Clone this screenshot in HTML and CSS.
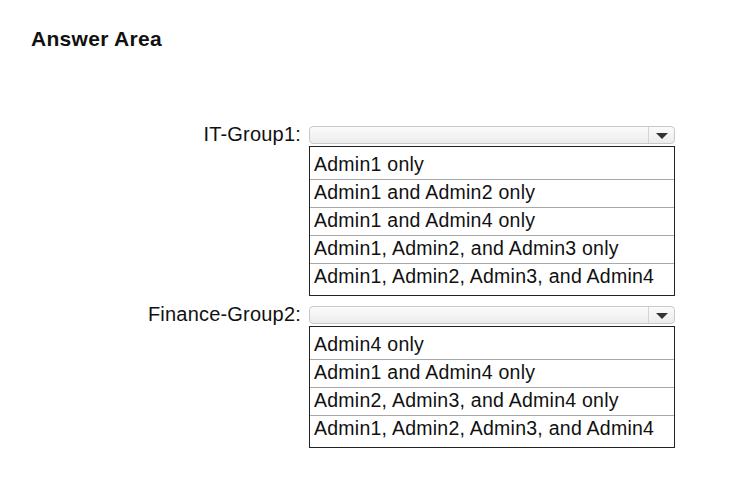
FILE: index.html
```html
<!DOCTYPE html>
<html>
<head>
<meta charset="utf-8">
<link rel="stylesheet" href="styles.css">
</head>
<body>
<div class="page">
  <h1 class="title">Answer Area</h1>
  <div class="group first">
    <div class="label">IT-Group1:</div>
    <div class="field">
      <div class="select"><span class="arrow"></span></div>
      <ul class="options">
        <li>Admin1 only</li>
        <li>Admin1 and Admin2 only</li>
        <li>Admin1 and Admin4 only</li>
        <li>Admin1, Admin2, and Admin3 only</li>
        <li>Admin1, Admin2, Admin3, and Admin4</li>
      </ul>
    </div>
  </div>
  <div class="group">
    <div class="label">Finance-Group2:</div>
    <div class="field">
      <div class="select"><span class="arrow"></span></div>
      <ul class="options">
        <li>Admin4 only</li>
        <li>Admin1 and Admin4 only</li>
        <li>Admin2, Admin3, and Admin4 only</li>
        <li>Admin1, Admin2, Admin3, and Admin4</li>
      </ul>
    </div>
  </div>
</div>
</body>
</html>
```
FILE: styles.css
```css
html, body {
  margin: 0;
  padding: 0;
  background: #fff;
}
body {
  font-family: "Liberation Sans", Arial, sans-serif;
  color: #111;
}
.page {
  width: 729px;
  height: 503px;
  padding: 27px 0 0 31px;
  box-sizing: border-box;
}
.title {
  margin: 0;
  font-size: 21px;
  font-weight: bold;
  letter-spacing: 0.3px;
  line-height: 24px;
  color: #111;
}
.group {
  display: flex;
  align-items: flex-start;
  margin-top: 10px;
}
.group.first {
  margin-top: 75px;
}
.label {
  width: 278px;
  text-align: right;
  font-size: 20px;
  letter-spacing: 0.2px;
  line-height: 17px;
  padding-right: 8px;
  box-sizing: border-box;
  white-space: nowrap;
}
.field {
  width: 366px;
}
.select {
  height: 18px;
  border: 1px solid #c9c9c9;
  border-radius: 4px;
  background: linear-gradient(#fbfbfb, #ececec);
  box-sizing: border-box;
  display: flex;
  justify-content: flex-end;
}
.arrow {
  width: 25px;
  border-left: 1px solid #d4d4d4;
  display: flex;
  align-items: center;
  justify-content: center;
}
.arrow::after {
  content: "";
  border-left: 6px solid transparent;
  border-right: 6px solid transparent;
  border-top: 6px solid #333;
  margin-top: 1px;
}
.options {
  list-style: none;
  margin: 2px 0 0 0;
  padding: 0 0 4px 0;
  border: 1px solid #222;
  width: 366px;
  box-sizing: border-box;
}
.options li {
  height: 28px;
  line-height: 20px;
  font-size: 19.5px;
  letter-spacing: 0.25px;
  padding-left: 4px;
  padding-top: 2px;
  border-top: 1px solid #a8a8a8;
  box-sizing: border-box;
  white-space: nowrap;
}
.options li:first-child {
  border-top: none;
  height: 32px;
  padding-top: 7px;
}
```
